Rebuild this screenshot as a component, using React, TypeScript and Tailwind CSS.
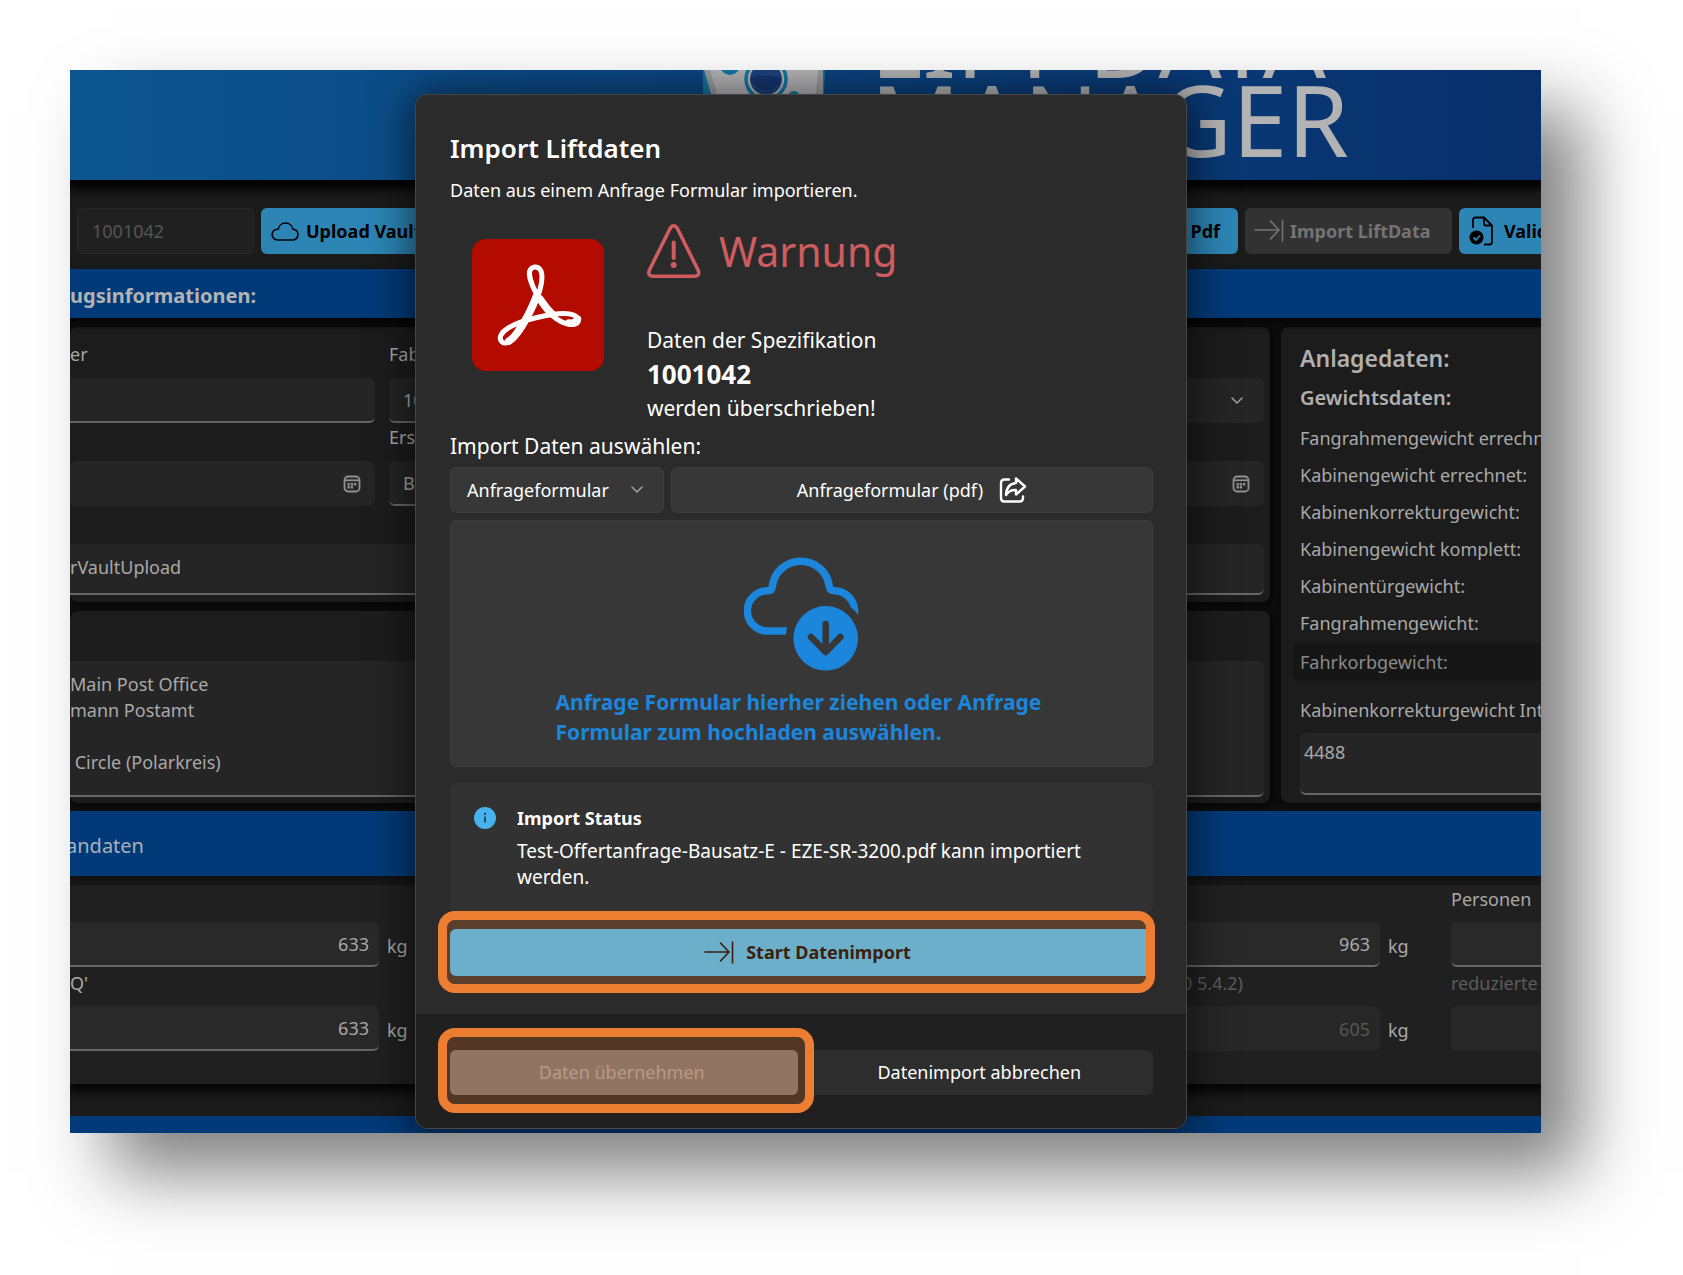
import React from 'react';

function CloudIcon() {
  return (
    <svg width="29" height="20" viewBox="0 0 29 20" fill="none" stroke="currentColor" strokeWidth="1.6" strokeLinejoin="round">
      <path d="M6.5 19H22.5A5.5 5.5 0 0 0 22.5 8.2H21.8A7.4 7.4 0 0 0 7.2 8.2H6.5A5.4 5.4 0 0 0 6.5 19Z" />
    </svg>
  );
}

function ImportIcon() {
  return (
    <svg width="30" height="26" viewBox="0 0 30 26" fill="none" stroke="currentColor" strokeWidth="1.6" strokeLinecap="round" strokeLinejoin="round">
      <path d="M1 12H25M16.500 3L25 12L16.500 21M28.500 2V23" />
    </svg>
  );
}

function DocumentCheckIcon() {
  return (
    <svg width="25" height="30" viewBox="0 0 25 30" fill="none" stroke="currentColor" strokeWidth="1.8" strokeLinejoin="round">
      <path d="M4 12V4Q4 1.500 6.500 1.500H15L23 9.500V26Q23 28.500 20.500 28.500H15M15 1.500V7.500Q15 9.500 17 9.500H23" />
      <circle cx="7.500" cy="21.500" r="7" fill="currentColor" stroke="none" />
      <path d="M4.500 21.500L7 24L11 19.500" stroke="#2c85b5" />
    </svg>
  );
}

function CalendarIcon() {
  return (
    <svg width="18" height="18" viewBox="0 0 18 18" fill="none" stroke="#8f8f8f" strokeWidth="1.8">
      <rect x="1.500" y="1.500" width="15" height="15" rx="3.500" />
      <path d="M1.500 5.300H16.500" />
      <path d="M4.500 9.300H13.500M4.500 12.300H10.500" strokeWidth="2.400" strokeDasharray="2.400 .8" />
    </svg>
  );
}

function ChevronDown() {
  return (
    <svg width="12" height="8" viewBox="0 0 12 8" fill="none" stroke="#a0a0a0" strokeWidth="1.5" strokeLinecap="round" strokeLinejoin="round">
      <path d="M1 1L6 6L11 1" />
    </svg>
  );
}

function ShareIcon() {
  return (
    <svg width="28" height="26" viewBox="0 0 28 26" fill="none" stroke="#ffffff" strokeWidth="2.4" strokeLinejoin="round" strokeLinecap="round">
      <path d="M10 2.500H5.500Q2 2.500 2 6V21Q2 24.500 5.500 24.500H20.500Q24 24.500 24 21V19.500" />
      <path d="M17 1.500L26 9.500L17 17.500V13Q10.500 12.500 7 18Q7.500 7 17 6Z" />
    </svg>
  );
}

function WarningIcon() {
  return (
    <svg width="54" height="54" viewBox="0 0 54 54" fill="none" stroke="#cf5c5f" strokeWidth="3.600" strokeLinejoin="round" strokeLinecap="round">
      <path d="M23.300 4Q26.700 -.6 30.100 4L51.300 46.500Q53 52 48 52.200H5.500Q.6 52 2.200 46.500Z" />
      <path d="M26.700 18.500V34" strokeWidth="4" />
      <circle cx="26.700" cy="41" r="3" fill="#cf5c5f" stroke="none" />
    </svg>
  );
}

function PdfLogo() {
  return (
    <svg width="132" height="132" viewBox="0 0 132 132" role="img" aria-label="Adobe Acrobat">
      <rect width="132" height="132" rx="14" fill="#b30b00" />
      <g fill="none" stroke="#ffffff" strokeLinejoin="round" strokeLinecap="round">
        <path strokeWidth="5" d="M64.500 55C58.500 44 56 34 58.500 30.500C61 27 66.500 27 69 32C72 40 68 53 62.500 66C56 80 47 97 38 102.500C31 106.500 26.500 101.500 29 96C34 87 50 82 65 78.500C80 75 94 73 101.500 76C109 79.500 107.500 85.500 99 85.500C86 85 71 70 64.500 55Z" />
        <path strokeWidth="7.500" d="M64.500 57C61 66 54 81 47 91Q42 99 37 102M68 60Q74 69 80 75M97 84Q104 85 105.500 80" />
      </g>
    </svg>
  );
}

function CloudDownloadIcon() {
  return (
    <svg width="115" height="114" viewBox="0 0 115 114" fill="none">
      <path d="M43 74H23.500A20.100 20.100 0 0 1 23.500 33.700Q28 33.700 28.300 29.500A28.700 28.700 0 0 1 85.300 29.500Q85.700 33.700 90 33.700A20.300 20.300 0 0 1 110.500 54V60" stroke="#1c86dc" strokeWidth="7.500" />
      <circle cx="81.700" cy="81.300" r="40" fill="#373737" />
      <circle cx="81.700" cy="81.300" r="32.300" fill="#1c86dc" />
      <path d="M81.700 67V94M67 80L81.700 95L96.400 80" stroke="#373737" strokeWidth="6.500" strokeLinecap="round" strokeLinejoin="round" />
    </svg>
  );
}

function RobotLogo() {
  return (
    <svg className="shrink-0 self-start" width="126" height="110" viewBox="2 0 126 110">
      <path d="M2 0H124L122 40L100 90H25L-2 40Z" fill="#1377a3" />
      <path d="M3 0H122V40L90 100H45L12 30Z" fill="#999c9e" />
      <path d="M9 0H117L113 40L90 90H45L18 30Z" fill="#b4b4b6" />
      <circle cx="29" cy="-5" r="10" fill="#1377a3" />
      <circle cx="93" cy="27" r="6" fill="#1377a3" />
      <circle cx="65" cy="9" r="20" fill="none" stroke="#1377a3" strokeWidth="3.500" strokeDasharray="44 19" strokeDashoffset="19" />
      <circle cx="65" cy="9" r="16" fill="#1d4280" />
      <path d="M49.500 8A16 16 0 0 0 80.500 8Q65 3 49.500 8Z" fill="#15356d" />
    </svg>
  );
}

const inputBox = 'block h-[45px] w-full min-w-0 rounded-md border-b-2 border-[#666666] bg-[#252525] text-[18px] text-[#a9a9a9] outline-none';
const plainBox = 'flex h-[45px] w-full items-center rounded-md bg-[#252525]';

function Label({ id, children, dim }: { id: string; children?: React.ReactNode; dim?: boolean }) {
  return (
    <label htmlFor={id} className={dim ? 'block h-[26px] text-[18px] leading-[26px] whitespace-nowrap text-[#5c5c5c]' : 'block h-[26px] text-[18px] leading-[26px] whitespace-nowrap text-[#a9a9a9]'}>
      {children}
    </label>
  );
}

function DateBox({ id }: { id: string }) {
  return (
    <div className={plainBox + ' pr-3.5'}>
      <input id={id} aria-label="Datum" className="min-w-0 flex-1 bg-transparent outline-none" />
      <button type="button" aria-label="Kalender"><CalendarIcon /></button>
    </div>
  );
}

const weights = [
  'Fangrahmengewicht errechnet:',
  'Kabinengewicht errechnet:',
  'Kabinenkorrekturgewicht:',
  'Kabinengewicht komplett:',
  'Kabinentürgewicht:',
  'Fangrahmengewicht:',
];

function Header() {
  return (
    <header className="relative z-10 flex h-[110px] items-end gap-[42px] overflow-hidden bg-linear-to-r from-[#0c558f] via-[#0b4380] to-[#08306b] pb-[22px] pl-[43%] shadow-[0_6px_9px_3px_#000000]">
      <RobotLogo />
      <h1 className="shrink-0 text-[99px] leading-[79px] whitespace-nowrap text-[#b3b3b3]">
        LIFT DATA<br />MANAGER
      </h1>
    </header>
  );
}

function Toolbar() {
  return (
    <div className="-mr-[58px] flex gap-[7px] pt-7 pb-[15px] pl-[7px] text-[18px]">
      <input aria-label="Auftragsnummer" disabled defaultValue="1001042" className="h-[46px] w-[177px] rounded-md border border-[#282828] bg-[#202020] px-3.5 text-[#555555]" />
      <button type="button" className="flex h-[46px] items-center gap-1.5 rounded-md bg-[#2c85b5] px-2.5 font-bold whitespace-nowrap text-black"><CloudIcon />Upload Vault</button>
      <div className="flex-1" />
      <button type="button" className="h-[46px] rounded-md bg-[#2c85b5] pr-[18px] pl-10 font-bold whitespace-nowrap text-black">Pdf</button>
      <button type="button" disabled className="flex h-[46px] w-[207px] items-center gap-1.5 rounded-md bg-[#323232] pl-[9px] font-bold whitespace-nowrap text-[#747474]"><ImportIcon />Import LiftData</button>
      <button type="button" className="flex h-[46px] w-[140px] items-center gap-2.5 rounded-md bg-[#2c85b5] pl-2.5 font-bold whitespace-nowrap text-black"><DocumentCheckIcon />Validieren</button>
    </div>
  );
}

function GeneralData() {
  return (
    <section className="rounded-lg bg-[#1c1c1c] pt-3.5 pr-1.5 pb-[7px] shadow-[2px_2px_6px_3px_#080808]">
      <div className="grid grid-cols-[305px_1fr_1fr] gap-x-3.5">
        <div>
          <Label id="auftrag">er</Label>
          <input id="auftrag" className={inputBox + ' mt-[11px] mb-px rounded-l-none'} />
        </div>
        <div>
          <Label id="fabrik">Fabrik</Label>
          <input id="fabrik" defaultValue="1001042" className={inputBox + ' mt-[11px] mb-px px-3.5'} />
        </div>
        <div>
          <Label id="typ" />
          <div className={plainBox + ' relative mt-[11px] mb-px'}>
            <select id="typ" aria-label="Typ" className="h-full w-full appearance-none bg-transparent outline-none"><option></option></select>
            <span className="pointer-events-none absolute right-[21px]"><ChevronDown /></span>
          </div>
        </div>
        <div>
          <Label id="datum1" />
          <div className="mt-[11px] mb-px"><DateBox id="datum1" /></div>
        </div>
        <div>
          <Label id="ersteller">Erstellt</Label>
          <input id="ersteller" defaultValue="B" className={inputBox + ' mt-[11px] mb-px px-3.5'} />
        </div>
        <div>
          <Label id="datum2" />
          <div className="mt-[11px] mb-px"><DateBox id="datum2" /></div>
        </div>
      </div>
      <input aria-label="Kommentar" defaultValue="rVaultUpload" className="mt-[37px] block h-[51px] w-full rounded-r-md border-b-2 border-[#666666] bg-[#252525] pb-1 text-[18px] text-[#a9a9a9] outline-none" />
    </section>
  );
}

function Dashboard() {
  return (
    <div className="bg-[#1b1b1b] text-[#a9a9a9]">
      <Header />
      <Toolbar />
      <h2 className="relative h-[49px] bg-[#003a78] text-[20px] leading-[54px] font-bold text-[#b3b3b3] shadow-[0_5px_6px_2px_#060606]">ugsinformationen:</h2>

      <div className="flex gap-[11px] bg-[#111111] pt-[9px] pb-2">
        <div className="flex min-w-0 flex-1 flex-col gap-[9px]">
          <GeneralData />
          <section className="flex-1 rounded-lg bg-[#1c1c1c] pt-[50px] pr-1.5 pb-1.5 shadow-[2px_2px_6px_3px_#080808]">
            <textarea
              aria-label="Projekt"
              defaultValue={'Main Post Office\nmann Postamt\n\n Circle (Polarkreis)'}
              className="block h-[136px] w-full resize-none overflow-hidden rounded-r-md border-b-2 border-[#666666] bg-[#252525] pt-2.5 text-[18px] leading-[26px] text-[#a9a9a9] outline-none"
            />
          </section>
        </div>
        <aside className="w-[260px] overflow-hidden rounded-l-lg bg-[#1c1c1c] pt-[11px] pb-[7px] pl-3 text-[18px] whitespace-nowrap shadow-[-1px_1px_6px_2px_#080808]">
          <h3 className="pl-[7px] text-[23px] leading-10 font-semibold text-[#b0b0b0]">Anlagedaten:</h3>
          <h4 className="mb-0.5 pl-[7px] text-[20px] leading-10 font-semibold text-[#b0b0b0]">Gewichtsdaten:</h4>
          {weights.map((w) => (
            <p key={w} className="pl-[7px] leading-[37px]">{w}</p>
          ))}
          <p className="mt-px rounded-l-md bg-[#161616] pl-[7px] leading-[38px] text-[#8b8b8b]">Fahrkorbgewicht:</p>
          <label htmlFor="info" className="mt-4 block pl-[7px] leading-[26px]">Kabinenkorrekturgewicht Int</label>
          <div className="mt-2.5 pl-[7px]">
            <textarea id="info" defaultValue="4488" className="block h-[62px] w-full resize-none rounded-l-md border-b-2 border-[#666666] bg-[#252525] px-1 pt-1.5 leading-[26px] outline-none" />
          </div>
        </aside>
      </div>

      <h2 className="relative h-[65px] bg-[#003a78] text-[20px] leading-[70px] text-[#a9b0ba] shadow-[0_3px_5px_#101010]"><span className="-ml-1">andaten</span></h2>

      <section className="relative mt-[9px] flex gap-x-2 bg-[#202020] pt-px pb-[30px] text-[18px] shadow-[0_6px_9px_2px_#050505]">
        <div className="w-[309px]">
          <Label id="q1" />
          <input id="q1" aria-label="Nennlast" defaultValue="633" className={inputBox + ' mt-2.5 mb-[3px] rounded-l-none bg-[#292929] pr-2.5 text-right'} />
          <Label id="q2">Q'</Label>
          <input id="q2" defaultValue="633" className={inputBox + ' mt-2.5 mb-[3px] rounded-l-none bg-[#292929] pr-2.5 text-right'} />
        </div>
        <Units />
        <div className="min-w-0 flex-1">
          <Label id="m1" />
          <input id="m1" aria-label="Masse" defaultValue="963" className={inputBox + ' mt-2.5 mb-[3px] bg-[#292929] pr-2.5 text-right'} />
          <div className="pr-[137px] text-right"><Label id="m2" dim>0 5.4.2)</Label></div>
          <input id="m2" disabled defaultValue="605" className="mt-2.5 mb-[3px] block h-[45px] w-full rounded-md bg-[#272727] pr-2.5 text-right text-[18px] text-[#565656]" />
        </div>
        <Units />
        <div className="w-[90px]">
          <Label id="p1">Personen</Label>
          <input id="p1" className={inputBox + ' mt-2.5 mb-[3px] rounded-r-none bg-[#292929]'} />
          <Label id="p2" dim>reduzierte</Label>
          <input id="p2" disabled className="mt-2.5 mb-[3px] block h-[45px] w-full rounded-l-md bg-[#272727]" />
        </div>
      </section>

      <div className="mt-8 h-[17px] bg-[#003a78]" />
    </div>
  );
}

function Units() {
  return (
    <div className="w-[55px] pt-[38px] leading-[45px]">
      <p>kg</p>
      <p className="mt-[39px]">kg</p>
    </div>
  );
}

function ImportDialog() {
  return (
    <div role="dialog" aria-labelledby="dialog-title" className="w-[772px] overflow-hidden rounded-xl border border-[#464646] bg-[#2b2b2b] text-white shadow-[0_4px_40px_6px_rgba(0,0,0,0.55)]">
      <div className="pt-[35px] pr-[33px] pb-[38px] pl-[34px]">
        <h2 id="dialog-title" className="text-[26px] leading-9 font-semibold">Import Liftdaten</h2>
        <p className="mt-2.5 text-[18px] leading-7">Daten aus einem Anfrage Formular importieren.</p>

        <div className="mt-[19px] flex gap-[43px] pl-[22px]">
          <div className="pt-4"><PdfLogo /></div>
          <div>
            <div className="flex h-14 items-center gap-[18px]">
              <WarningIcon />
              <span className="text-[41px] leading-[56px] text-[#cf5c5f]">Warnung</span>
            </div>
            <div className="mt-11 text-[21px] leading-[34px]">
              <p>Daten der Spezifikation</p>
              <p className="text-[26px] font-bold">1001042</p>
              <p>werden überschrieben!</p>
            </div>
          </div>
        </div>

        <label htmlFor="source" className="mt-1.5 block text-[21px] leading-[30px]">Import Daten auswählen:</label>
        <div className="mt-1.5 flex gap-[7px]">
          <div className="relative flex w-[214px] items-center">
            <select id="source" className="h-[46px] w-full appearance-none rounded-md border border-[#3d3d3d] bg-[#373737] pl-4 text-[18px] text-white outline-none">
              <option>Anfrageformular</option>
            </select>
            <span className="pointer-events-none absolute right-[21px]"><ChevronDown /></span>
          </div>
          <button type="button" className="flex h-[46px] flex-1 items-center justify-center gap-4 rounded-md border border-[#3d3d3d] bg-[#373737] text-[18px]">
            Anfrageformular (pdf)<ShareIcon />
          </button>
        </div>

        <button type="button" className="mt-[7px] flex h-[247px] w-full flex-col items-center rounded-md border border-[#3d3d3d] bg-[#373737] pt-9">
          <CloudDownloadIcon />
          <span className="mt-4 w-[492px] text-left text-[21px] leading-[30px] font-bold text-[#1c86dc]">
            Anfrage Formular hierher ziehen oder Anfrage Formular zum hochladen auswählen.
          </span>
        </button>

        <div role="status" className="mt-4 flex gap-[21px] rounded-md bg-[#323232] py-[22px] pr-6 pl-6">
          <svg className="mt-0.5 shrink-0" width="22" height="22" viewBox="0 0 22 22">
            <circle cx="11" cy="11" r="11" fill="#48b2ee" />
            <path d="M11 9.500V15.500" stroke="#16374a" strokeWidth="1.600" />
            <circle cx="11" cy="6.800" r="1.100" fill="#16374a" />
          </svg>
          <div>
            <h3 className="text-[18px] leading-[26px] font-bold">Import Status</h3>
            <p className="mt-[7px] w-[580px] text-[19px] leading-[26px]">Test-Offertanfrage-Bausatz-E - EZE-SR-3200.pdf kann importiert werden.</p>
          </div>
        </div>

        <div className="relative mt-[17px]">
          <button type="button" className="flex h-[47px] w-full items-center justify-center gap-3 rounded-md bg-[#42c0ff] pl-3 text-[18px] font-bold text-black">
            <ImportIcon />Start Datenimport
          </button>
          <div className="pointer-events-none absolute -top-[18px] -right-0.5 -bottom-[17px] -left-3 rounded-[17px] border-[9px] border-[#ed7d31] bg-[#ed7d31]/25 bg-clip-padding" />
        </div>
      </div>

      <div className="grid grid-cols-2 gap-2 border-t border-[#1c1c1c] bg-[#202020] pt-[35px] pr-[33px] pb-[33px] pl-[34px] text-[18px]">
        <div className="relative z-10">
          <button type="button" disabled className="h-[45px] w-full rounded-md bg-[#757275] pr-1 text-[#a5a5a5]">Daten übernehmen</button>
          <div className="pointer-events-none absolute -top-[22px] -right-4 -bottom-[18px] -left-3 rounded-[17px] border-[9px] border-[#ed7d31] bg-[#ed7d31]/25 bg-clip-padding" />
        </div>
        <button type="button" className="h-[45px] rounded-md bg-[#2d2d2d]">Datenimport abbrechen</button>
      </div>
    </div>
  );
}

export default function App() {
  return (
    <main className="min-h-screen bg-white pt-[70px] pr-[142px] pb-[142px] pl-[70px] font-['Noto_Sans','Open_Sans',sans-serif]">
      <div className="relative overflow-hidden shadow-[40px_40px_68px_rgba(0,0,0,0.5)]">
        <Dashboard />
        <div className="absolute inset-0 z-20 flex items-start justify-center pt-6 pr-[9px]">
          <ImportDialog />
        </div>
      </div>
    </main>
  );
}
